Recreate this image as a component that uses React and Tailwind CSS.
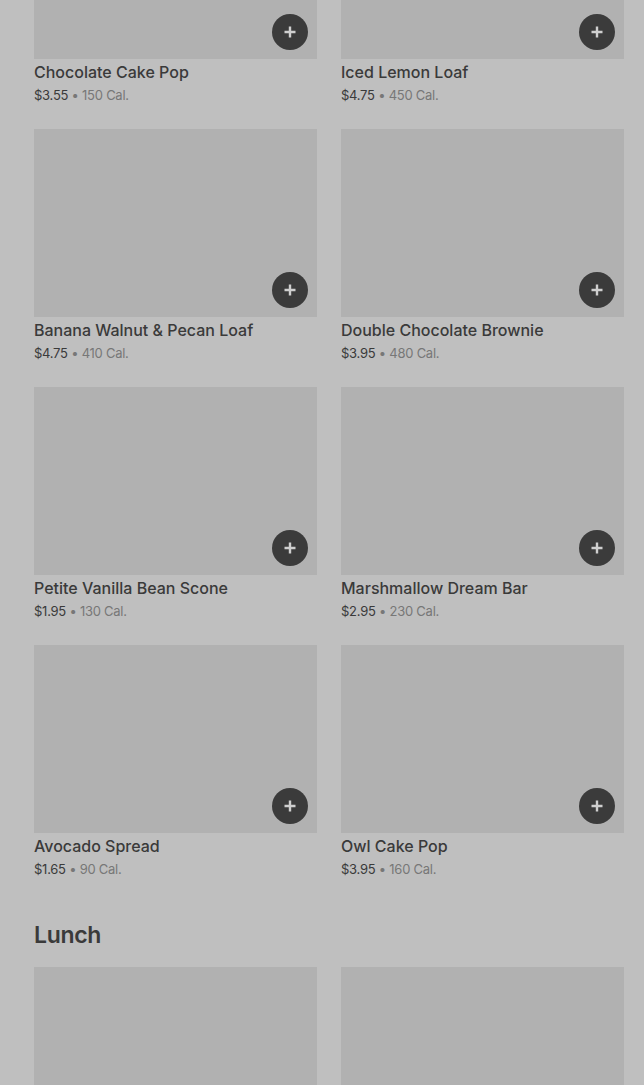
import React from "react";

const items = [
  ["Chocolate Cake Pop", "$3.55", "150 Cal."],
  ["Iced Lemon Loaf", "$4.75", "450 Cal."],
  ["Banana Walnut & Pecan Loaf", "$4.75", "410 Cal."],
  ["Double Chocolate Brownie", "$3.95", "480 Cal."],
  ["Petite Vanilla Bean Scone", "$1.95", "130 Cal."],
  ["Marshmallow Dream Bar", "$2.95", "230 Cal."],
  ["Avocado Spread", "$1.65", "90 Cal."],
  ["Owl Cake Pop", "$3.95", "160 Cal."],
];

function Plus() {
  return (
    <svg width="14" height="14" viewBox="0 0 14 14" fill="none">
      <path d="M7 1.5v11M1.5 7h11" stroke="#cfcfcf" strokeWidth="2.4" />
    </svg>
  );
}

function Card({ name, price, cal }) {
  return (
    <div className="flex flex-col">
      <div className="relative h-[188px] bg-[#b1b1b1]">
        <button className="absolute bottom-[9px] right-[9px] flex h-9 w-9 items-center justify-center rounded-full bg-[#3b3b3b]">
          <Plus />
        </button>
      </div>
      <div className="pt-px text-[16px] leading-6 font-medium text-[#3a3a3a]">{name}</div>
      <div className="pt-px text-[13px] leading-5 tracking-[-0.25px] text-[#3a3a3a]">
        {price}
        <span className="text-[#777777]"> • {cal}</span>
      </div>
    </div>
  );
}

export default function App() {
  return (
    <div
      className="h-[1085px] w-full overflow-hidden bg-[#bfbfbf] pl-[34px] pr-5"
      style={{ fontFamily: "Inter, Roboto, 'Liberation Sans', sans-serif" }}
    >
      <div className="-mt-[129px] grid grid-cols-[283px_283px] gap-x-6 gap-y-6">
        {items.map(([n, p, c]) => (
          <Card key={n} name={n} price={p} cal={c} />
        ))}
      </div>
      <h2 className="mt-10 text-[23px] leading-8 font-semibold text-[#3a3a3a] tracking-[-0.3px]">
        Lunch
      </h2>
      <div className="mt-[16px] grid grid-cols-[283px_283px] gap-x-6">
        <div className="h-[188px] bg-[#b1b1b1]" />
        <div className="h-[188px] bg-[#b1b1b1]" />
      </div>
    </div>
  );
}
